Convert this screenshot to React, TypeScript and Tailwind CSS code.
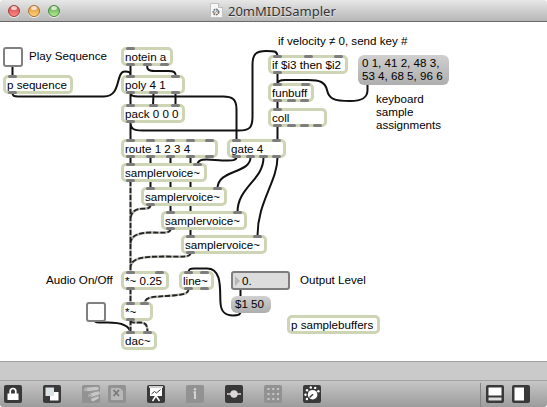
import React from "react";

type Node = {
  text: string;
  x: number;
  y: number;
  w: number;
  ins?: number[];
  outs?: number[];
};

const nodes: Node[] = [
  { text: "notein a", x: 121, y: 47, w: 52, ins: [5], outs: [5, 21.5, 38.5] },
  { text: "p sequence", x: 3, y: 75, w: 70, ins: [5], outs: [5] },
  { text: "poly 4 1", x: 121, y: 75, w: 64, ins: [5, 50], outs: [5, 28, 50] },
  { text: "pack 0 0 0", x: 121, y: 104, w: 64, ins: [5, 28, 50], outs: [5] },
  { text: "route 1 2 3 4", x: 121, y: 139, w: 97, ins: [5, 25, 45, 64.5, 84], outs: [5, 25, 45, 64.5, 84] },
  { text: "samplervoice~", x: 121, y: 163, w: 86, ins: [5, 72], outs: [5] },
  { text: "samplervoice~", x: 141, y: 187, w: 86, ins: [5, 72], outs: [5] },
  { text: "samplervoice~", x: 161, y: 211, w: 86, ins: [5, 72], outs: [5] },
  { text: "samplervoice~", x: 181, y: 235, w: 86, ins: [5, 72], outs: [5] },
  { text: "gate 4", x: 227, y: 139, w: 59, ins: [5, 45], outs: [5, 19, 32, 45] },
  { text: "*~ 0.25", x: 121, y: 271, w: 48, ins: [5, 34], outs: [5] },
  { text: "line~", x: 179, y: 271, w: 35, ins: [5, 21], outs: [5, 21] },
  { text: "*~", x: 121, y: 302, w: 32, ins: [5, 19], outs: [5] },
  { text: "dac~", x: 121, y: 331, w: 36, ins: [5, 22] },
  { text: "if $i3 then $i2", x: 268, y: 55, w: 80, ins: [5, 35.5, 66], outs: [5] },
  { text: "funbuff", x: 268, y: 83, w: 46, ins: [5, 32.5], outs: [5, 18.5, 32] },
  { text: "coll", x: 268, y: 108, w: 59, ins: [5], outs: [5, 18.5, 32, 45] },
  { text: "p samplebuffers", x: 287, y: 315, w: 93 },
];

const cords = [
  "M12.5 66V77",
  "M12.5 93C12.5 96 14 96.5 18 96.5H104C122 96.5 115 71.5 125 71.5C129 71.5 130.5 72 130.5 76",
  "M130.5 65V77",
  "M147 65C147 70 149 71 155 71H168C174 71 176 72 176 77",
  "M130.5 93V106M153.5 93L153 106M175.5 93V106",
  "M130.5 93C130.5 96 133 96.5 138 96.5H223C232 96.5 236.5 99 236.5 109V141",
  "M130.5 122V141",
  "M130.5 123C130.5 129 134 130.5 142 130.5H239C249 130.5 252.5 128 252.5 117V65C252.5 54 256 51 266 51C275 51 277.5 51 277.5 57",
  "M277.5 73V85M277.5 101V110M277.5 126V141",
  "M367.5 84V90C367.5 98 362 101 350 101C334 101 329 99 327 90C325 82 320 80 308 80H285C280 80 277.5 81 277.5 84",
  "M130.5 157V165M150.5 157V189M170.5 157V213M190.5 157V237",
  "M236.5 157C236.5 161 231 160.5 222 160.5C210 160 197.5 157 197.5 165",
  "M250.5 157C251 174 217 169 217.5 189",
  "M263.5 157C264 180 237 187 237.5 213",
  "M277.5 157C277.5 182 257 202 257.5 237",
  "M240.5 289V298",
  "M240.5 312C240.5 315 238 315.5 233 315.5C224 315.5 221 311 220.5 303C219.5 292 223 268.5 207 268.5H194C190 268.5 188.5 269 188.5 273",
  "M95 321C95 322.5 97 322.5 103 322.5C116 322 130 324 130.5 333",
];

const signals = [
  "M130.5 181V273",
  "M150.5 205C150.5 210 143 208 139 209C134 210 130.5 213 130.5 220",
  "M170.5 229C170.5 234 161 232.5 152 232.5C139 232.5 130.5 235 130.5 244",
  "M190.5 253C190.5 258 180 256.5 165 256.5C142 256.5 130.5 258 130.5 268",
  "M130.5 289V304",
  "M188.5 289C188.5 294 183 294.5 173 295.5C155 297 144.5 296 144.5 304",
  "M130.5 320V333",
  "M130.5 321C131 323 134 322.5 140 322.5C146 322.5 147.5 325 147.5 333",
];

const comments = [
  { text: "Play Sequence", x: 29, y: 49 },
  { text: "if velocity ≠ 0, send key #", x: 278, y: 34 },
  { text: "keyboard\nsample\nassignments", x: 376, y: 92 },
  { text: "Audio On/Off", x: 46, y: 273 },
  { text: "Output Level", x: 300, y: 273 },
];

function Lets({ at, side }: { at?: number[]; side: string }) {
  return (
    <>
      {at?.map((x) => (
        <i key={x} className={`absolute h-[3px] w-[9px] rounded-[1.5px] bg-[#7d7d7d] ${side}`} style={{ left: x }} />
      ))}
    </>
  );
}

function ObjectBox({ n }: { n: Node }) {
  return (
    <div className="absolute h-[19px]" style={{ left: n.x, top: n.y, width: n.w }}>
      <div className="h-full rounded-[5px] border-[3px] border-[#cdd5b4] bg-white pl-[1px] leading-[13px] whitespace-nowrap">
        {n.text}
      </div>
      <Lets at={n.ins} side="top-0" />
      <Lets at={n.outs} side="bottom-0" />
    </div>
  );
}

function Tool({ dim, children }: { dim?: boolean; children: React.ReactNode }) {
  return (
    <div className={`size-[18px] rounded-[2px] ${dim ? "bg-[#929292]" : "bg-[#393939]"}`}>
      <svg width="18" height="18" viewBox="0 0 18 18" fill="none">
        {children}
      </svg>
    </div>
  );
}

function Light({ color }: { color: string }) {
  return (
    <div className={`relative size-3 overflow-hidden rounded-full border shadow-[0_1px_0_#eee] ${color}`}>
      <div className="mx-auto h-[4px] w-[6px] rounded-full bg-white/70" />
    </div>
  );
}

function TitleBar() {
  return (
    <header className="flex h-[22px] shrink-0 items-center border-b border-[#686868] bg-linear-to-b from-[#e7e7e7] to-[#b7b7b7] pl-2">
      <div className="flex w-[202px] gap-2">
        <Light color="border-[#a33c3d] bg-linear-to-b from-[#cf4548] to-[#ff8a85]" />
        <Light color="border-[#ad702f] bg-linear-to-b from-[#dc8c36] to-[#ffd478]" />
        <Light color="border-[#4b883f] bg-linear-to-b from-[#55a148] to-[#b5ed96]" />
      </div>
      <svg width="13" height="15" viewBox="0 0 13 15">
        <path d="M.5 .5H8.5L12.5 4.5V14.5H.5Z" fill="#f7f7f7" stroke="#c3c3c3" />
        <path d="M8.5 .5V4.5H12.5" fill="#ddd" stroke="#bbb" />
        <circle cx="6" cy="9" r="2.6" fill="none" stroke="#777" strokeWidth="1.8" strokeDasharray="1.7 .7" />
        <path d="M3.5 10.5L6 9" stroke="#d98242" />
        <path d="M6 9L8 7" stroke="#6d9fca" />
      </svg>
      <h1 className="ml-[5px] font-['Noto_Sans',sans-serif] text-[13px] leading-5 text-[#353535] [text-shadow:0_1px_0_#e5e5e5]">
        20mMIDISampler
      </h1>
    </header>
  );
}

function Patcher() {
  return (
    <main className="relative h-[339px] shrink-0 overflow-hidden bg-white">
      <div className="absolute -top-[22px] left-0 h-[361px] w-[547px]">
        <svg className="absolute inset-0" width="547" height="361" fill="none">
          <path d={cords.join("")} stroke="#111" strokeWidth="2" />
          <path d={signals.join("")} stroke="#b4b4ac" strokeWidth="2.4" />
          <path d={signals.join("")} stroke="#222" strokeWidth="1.8" strokeDasharray="5 2" />
        </svg>
        <div className="absolute top-[47px] left-[3px] size-5 rounded-[3px] border-2 border-[#808080] bg-white" />
        <div className="absolute top-[302px] left-[86px] size-5 rounded-[3px] border-2 border-[#808080] bg-white" />
        {nodes.map((n, i) => (
          <ObjectBox key={i} n={n} />
        ))}
        <div className="absolute top-[55px] left-[358px] h-[30px] w-[91px] rounded-[6px] bg-linear-to-b from-[#d0d0d0] to-[#aeaeae] pt-[1px] pl-[4px] leading-[13px] whitespace-pre">
          {"0 1, 41 2, 48 3,\n53 4, 68 5, 96 6"}
        </div>
        <div className="absolute top-[271px] left-[231px] flex h-[19px] w-[59px] items-center rounded-[3px] border-2 border-[#7d7d7d] bg-[#dcdcdc] pl-[2px]">
          <svg width="5" height="10" viewBox="0 0 5 10">
            <path d="M0 0L5 5L0 10Z" fill="#b5b5b5" />
          </svg>
          <span className="ml-[2px] leading-[15px]">0.</span>
        </div>
        <div className="absolute top-[296px] left-[231px] h-[17px] w-10 rounded-[6px] bg-linear-to-b from-[#d0d0d0] to-[#aeaeae] pl-[4px] leading-[16px]">
          $1 50
        </div>
        {comments.map((c) => (
          <p key={c.text} className="absolute leading-[13px] whitespace-pre" style={{ left: c.x, top: c.y }}>
            {c.text}
          </p>
        ))}
      </div>
    </main>
  );
}

function Toolbar() {
  return (
    <footer className="flex h-[27px] shrink-0 items-start gap-[21px] border-t border-[#a3a3a3] bg-linear-to-b from-[#c6c6c6] to-[#9c9c9c] pt-1 pl-1">
      <Tool>
        <path d="M6.2 9V6.3a2.8 2.8 0 0 1 5.6 0V9" stroke="#fff" strokeWidth="1.7" />
        <path d="M3.5 8.5h11V15h-11Z" fill="#fff" />
      </Tool>
      <Tool>
        <path d="M7 7h8.5v8.5H7Z" fill="#fff" />
        <path d="M2.5 2.5H11V11H2.5Z" fill="#dce3e5" />
      </Tool>
      <div className="flex gap-2">
        <Tool dim>
          <path d="M3.5 4.5L15 3.5M8 10.5L16 8M11 14.5L15 12.5" stroke="#c6c6c6" strokeWidth="3.6" strokeLinecap="round" />
          <path d="M6 7L16.5 5.8M10 13L16.5 10.5" stroke="#999" />
          <circle cx="3.5" cy="4.5" r="1.2" stroke="#999" />
          <circle cx="8" cy="10.5" r="1.2" stroke="#999" />
        </Tool>
        <Tool dim>
          <path d="M3 3h9l3 3v9H3Z" fill="#b8b8b8" />
          <path d="M5.5 5L11 11M11 5L5.5 11" stroke="#777" strokeWidth="1.7" />
        </Tool>
      </div>
      <Tool>
        <path d="M2 2H16M8.8 11L5.5 16M9.2 11L12.5 16" stroke="#fff" strokeWidth="1.5" />
        <path d="M3 3h12v8H3Z" fill="#fff" />
        <path d="M4.5 9L7.5 6.5L9.5 8L13.5 4.5" stroke="#393939" />
      </Tool>
      <Tool dim>
        <path d="M7.5 7.3H9V14" stroke="#d3d3d3" strokeWidth="2" />
        <circle cx="9" cy="4.3" r="1.2" fill="#d3d3d3" />
      </Tool>
      <Tool>
        <path d="M2 9H16" stroke="#ddd8d8" strokeWidth="1.7" />
        <circle cx="9" cy="9" r="3.7" fill="#ddd8d8" />
      </Tool>
      <Tool dim>
        <path d="M3.5 4H15M3.5 9H15M3.5 14H15" stroke="#c9c9c9" strokeWidth="2" strokeDasharray="2 2.8" />
      </Tool>
      <Tool>
        <circle cx="9.6" cy="9.7" r="4.8" fill="#fff" />
        <path d="M6.5 12.5L10 9.2" stroke="#393939" strokeWidth="1.5" />
        <g fill="#fff">
          <circle cx="3.9" cy="14" r="1.2" />
          <circle cx="2.5" cy="9.7" r="1.2" />
          <circle cx="4" cy="5.2" r="1.2" />
          <circle cx="7.8" cy="2.5" r="1.2" />
          <circle cx="12.2" cy="2.9" r="1.2" />
          <circle cx="15.4" cy="6.2" r="1.2" />
        </g>
      </Tool>
      <div className="-mt-[2px] mr-[5px] ml-auto flex h-6 gap-2 border-l border-[#858585] pt-[2px] pl-[5px]">
        <Tool>
          <path d="M2.5 2.5H15.5V10.5H2.5Z" fill="#fff" />
          <path d="M2.5 12.5H15.5V15.5H2.5Z" fill="#ddd" />
        </Tool>
        <div className="mr-[12px]">
          <Tool>
            <path d="M2.5 2.5H12V15.5H2.5Z" fill="#fff" />
          </Tool>
        </div>
      </div>
    </footer>
  );
}

export default function App() {
  return (
    <div className="flex h-[407px] w-[547px] flex-col overflow-hidden rounded-[3px] bg-white font-['Liberation_Sans',Arial,sans-serif] text-[11.6px] text-black">
      <TitleBar />
      <Patcher />
      <div className="h-[19px] shrink-0 border-t border-[#a0a0a0] bg-[#cacaca]" />
      <Toolbar />
    </div>
  );
}
